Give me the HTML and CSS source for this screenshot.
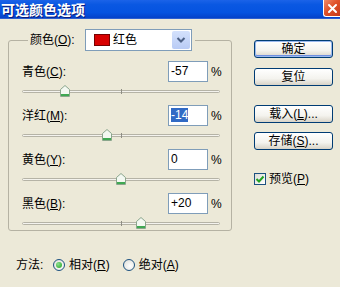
FILE: index.html
```html
<!doctype html>
<html lang="zh-CN">

<head>
  <meta charset="UTF-8" />
  <meta name="viewport" content="width=device-width, initial-scale=1.0" />
  <title>可选颜色选项</title>
  <link rel="stylesheet" href="styles.css">
</head>

<body>
  <svg class="defs" width="0" height="0">
    <symbol id="thumb" viewBox="0 0 10 12">
      <path d="M0.5 4.5 L5 0.5 L9.5 4.5 V11.5 H0.5 Z" fill="#f3f8f1" stroke="#8aa68c" />
      <rect x="1" y="9" width="8" height="2" fill="#3fa852" />
    </symbol>
  </svg>

  <div class="window">
    <div class="titlebar">
      <span class="title">可选颜色选项</span>
      <span class="close">
        <svg width="15" height="15" viewBox="0 0 15 15">
          <path d="M4 4 L11 11 M11 4 L4 11" stroke="#fff" stroke-width="2" stroke-linecap="round" />
        </svg>
      </span>
    </div>

    <div class="content">
      <div class="left">
        <fieldset class="group">
          <legend>
            <div class="group-head">
              <span class="label">颜色(<u>O</u>):</span>
              <div class="select">
                <span class="swatch"></span>
                <span class="select-text">红色</span>
                <span class="select-btn">
                  <svg width="10" height="8" viewBox="0 0 10 8">
                    <path d="M1.5 2 L5 5.5 L8.5 2" fill="none" stroke="#4d6185" stroke-width="2" />
                  </svg>
                </span>
              </div>
            </div>
          </legend>

          <div class="channels">
            <!-- Cyan -->
            <div class="channel">
              <div class="channel-row">
                <span class="label">青色(<u>C</u>):</span>
                <span class="field">-57</span>
                <span class="pct">%</span>
              </div>
              <div class="slider">
                <div class="track"></div>
                <div class="tick"></div>
                <svg class="thumb" style="left: 21.5%"><use href="#thumb" /></svg>
              </div>
            </div>

            <!-- Magenta -->
            <div class="channel">
              <div class="channel-row">
                <span class="label">洋红(<u>M</u>):</span>
                <span class="field"><span class="selected">-14</span></span>
                <span class="pct">%</span>
              </div>
              <div class="slider">
                <div class="track"></div>
                <div class="tick"></div>
                <svg class="thumb" style="left: 43%"><use href="#thumb" /></svg>
              </div>
            </div>

            <!-- Yellow -->
            <div class="channel">
              <div class="channel-row">
                <span class="label">黄色(<u>Y</u>):</span>
                <span class="field">0</span>
                <span class="pct">%</span>
              </div>
              <div class="slider">
                <div class="track"></div>
                <div class="tick"></div>
                <svg class="thumb" style="left: 50%"><use href="#thumb" /></svg>
              </div>
            </div>

            <!-- Black -->
            <div class="channel">
              <div class="channel-row">
                <span class="label">黑色(<u>B</u>):</span>
                <span class="field">+20</span>
                <span class="pct">%</span>
              </div>
              <div class="slider">
                <div class="track"></div>
                <div class="tick"></div>
                <svg class="thumb" style="left: 60%"><use href="#thumb" /></svg>
              </div>
            </div>
          </div>
        </fieldset>

        <div class="method">
          <span class="method-label">方法:</span>
          <span class="radio checked"></span>
          <span class="radio-text">相对(<u>R</u>)</span>
          <span class="radio"></span>
          <span class="radio-text">绝对(<u>A</u>)</span>
        </div>
      </div>

      <div class="right">
        <button class="btn default">确定</button>
        <button class="btn reset">复位</button>
        <button class="btn load">载入(<u>L</u>)...</button>
        <button class="btn save">存储(<u>S</u>)...</button>
        <div class="check">
          <span class="checkbox">
            <svg width="10" height="10" viewBox="0 0 10 10">
              <path d="M1.5 5 L4 7.5 L8.5 2.5" fill="none" stroke="#21a121" stroke-width="2" />
            </svg>
          </span>
          <span>预览(<u>P</u>)</span>
        </div>
      </div>
    </div>
  </div>
</body>

</html>
```

FILE: styles.css
```css
* {
  box-sizing: border-box;
}

body {
  margin: 0;
  background: #ece9d8;
  font: 12px/14px "Liberation Sans", "Noto Sans CJK SC", sans-serif;
  color: #000;
}

.defs {
  position: absolute;
}

.window {
  width: 340px;
  height: 287px;
  overflow: hidden;
}

/* Title bar */
.titlebar {
  height: 19px;
  display: flex;
  justify-content: space-between;
  align-items: flex-start;
  background: linear-gradient(#1b63e8, #0a58e2 25%, #0553e0 70%, #0442c9);
  border-bottom: 1px solid #2c5fd0;
}

.title {
  padding-left: 1px;
  font: bold 14px/18px "Noto Sans CJK SC", sans-serif;
  color: #fff;
  text-shadow: 1px 1px 0 #0a1b7a;
}

.close {
  width: 17px;
  height: 17px;
  display: flex;
  align-items: center;
  justify-content: center;
  background: linear-gradient(135deg, #f08a6a, #e0522a 45%, #c4391a);
  border-left: 1px solid #fff;
  border-bottom: 1px solid #fff;
  border-bottom-left-radius: 3px;
}

/* Layout */
.content {
  display: flex;
}

.left {
  width: 232px;
  padding: 10px 0 0 8px;
}

.right {
  width: 79px;
  margin-left: 22px;
  padding-top: 21px;
  display: flex;
  flex-direction: column;
}

/* Group box */
.group {
  margin: 0;
  width: 224px;
  padding: 0 11px 1px 13px;
  border: 1px solid #b5b2a3;
  border-radius: 3px;
}

.group legend {
  margin-left: 6px;
  padding: 0 3px 0 2px;
}

.group-head {
  display: flex;
  align-items: center;
}

.group-head .label {
  width: 55px;
}

.select {
  width: 107px;
  height: 22px;
  display: flex;
  align-items: center;
  padding: 1px;
  background: #fff;
  border: 1px solid #7f9db9;
}

.swatch {
  width: 16px;
  height: 12px;
  margin-left: 7px;
  background: #d80000;
  border: 1px solid #700;
}

.select-text {
  flex: 1;
  margin-left: 3px;
}

.select-btn {
  width: 18px;
  height: 18px;
  display: flex;
  align-items: center;
  justify-content: center;
  background: linear-gradient(#d4e1fc, #b9cbf5);
  border-radius: 2px;
}

/* Channels */
.channels {
  display: flex;
  flex-direction: column;
  gap: 8px;
  margin-top: 10px;
}

.channel-row {
  height: 21px;
  display: flex;
  align-items: center;
}

.channel-row .label {
  flex: 1;
}

.field {
  width: 40px;
  height: 21px;
  padding: 0 2px;
  line-height: 19px;
  background: #fff;
  border: 1px solid #7f9db9;
}

.selected {
  background: #316ac5;
  color: #fff;
}

.pct {
  width: 9px;
  margin-left: 3px;
}

.slider {
  position: relative;
  height: 15px;
}

.track {
  position: absolute;
  top: 8px;
  left: 0;
  right: 0;
  height: 3px;
  background: #f4f3ee;
  border: 1px solid #b5b3a6;
  border-radius: 2px;
}

.tick {
  position: absolute;
  top: 7px;
  left: 50%;
  width: 1px;
  height: 5px;
  background: #8e8d84;
}

.thumb {
  position: absolute;
  top: 3px;
  width: 10px;
  height: 12px;
  margin-left: -5px;
}

/* Method radios */
.method {
  margin-top: 27px;
  height: 14px;
  display: flex;
  align-items: center;
  padding-left: 8px;
}

.method-label {
  width: 37px;
}

.radio {
  width: 12px;
  height: 12px;
  border: 1px solid #1c5180;
  border-radius: 50%;
  background: radial-gradient(circle at 60% 60%, #fff, #dcdcd5);
  display: flex;
  align-items: center;
  justify-content: center;
}

.radio.checked::after {
  content: "";
  width: 6px;
  height: 6px;
  border-radius: 50%;
  background: radial-gradient(circle at 35% 35%, #8be08e, #21a121);
}

.radio-text {
  margin-left: 4px;
  margin-right: 13px;
}

/* Buttons */
.btn {
  width: 79px;
  height: 18px;
  padding: 0;
  font: inherit;
  color: #000;
  border: 1px solid #003c74;
  border-radius: 3px;
  background: linear-gradient(#fff, #f4f3ee 60%, #d8d3c7);
}

.btn.default {
  box-shadow: inset 0 0 0 1px #9ab9ef, inset 0 -1px 0 1px #6f8fe0;
}

.btn.reset {
  margin-top: 10px;
}

.btn.load {
  margin-top: 19px;
}

.btn.save {
  margin-top: 9px;
}

.check {
  margin-top: 22px;
  display: flex;
  align-items: center;
  gap: 3px;
}

.checkbox {
  width: 12px;
  height: 12px;
  display: flex;
  align-items: center;
  justify-content: center;
  border: 1px solid #1c5180;
  background: linear-gradient(135deg, #dcdcd5, #fff);
}
```
